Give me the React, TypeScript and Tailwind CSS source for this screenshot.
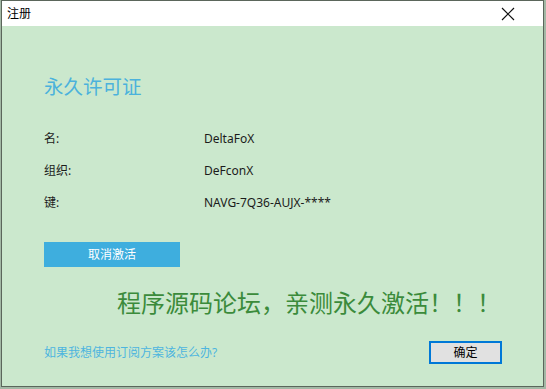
import React from "react";

const cjk = { fontFamily: '"Noto Sans", "Noto Sans CJK SC", sans-serif' };

export default function App() {
  return (
    <div className="w-[546px] h-[389px] bg-[#a3b8a5] overflow-hidden" style={cjk}>
      <div className="ml-[1px] w-[543px] h-[387px] border border-[#5b665b] bg-[#cbe8cd] flex flex-col">
        {/* title bar */}
        <div className="h-[25px] bg-white flex items-center justify-between pl-[5px] pr-[25px] shrink-0">
          <span className="text-[12px] text-black leading-none">注册</span>
          <svg width="14" height="14" viewBox="0 0 14 14" className="mr-[3px]">
            <path d="M1 1 L13 13 M13 1 L1 13" stroke="#111" strokeWidth="1.2" />
          </svg>
        </div>
        {/* content */}
        <div className="flex-1 flex flex-col pl-[42px] pr-[41px]">
          <div className="mt-[47px] h-[28px] flex items-center text-[19.5px] text-[#4bb2dc] leading-none">
            永久许可证
          </div>
          <div className="mt-[22px] flex flex-col text-[12px] text-[#1b1b1b]">
            {[
              ["名:", "DeltaFoX"],
              ["组织:", "DeFconX"],
              ["键:", "NAVG-7Q36-AUJX-****"],
            ].map(([k, v]) => (
              <div key={k} className="h-[32px] flex items-center">
                <span className="w-[160px]">{k}</span>
                <span>{v}</span>
              </div>
            ))}
          </div>
          <div className="mt-[23px] w-[136px] h-[25px] bg-[#3eaede] text-white text-[12px] flex items-center justify-center">
            取消激活
          </div>
          <div className="mt-[22px] h-[28px] flex items-center pl-[73px] text-[24px] text-[#3b8b3b] leading-none whitespace-nowrap">
            程序源码论坛，亲测永久激活！！！
          </div>
          <div className="mt-[24px] flex items-center justify-between">
            <span className="text-[12px] text-[#4db5df]">如果我想使用订阅方案该怎么办?</span>
            <div className="w-[73px] h-[23px] border-2 border-[#0078d7] bg-[#e1e1e1] flex items-center justify-center text-[12px] text-black">
              确定
            </div>
          </div>
        </div>
      </div>
    </div>
  );
}
